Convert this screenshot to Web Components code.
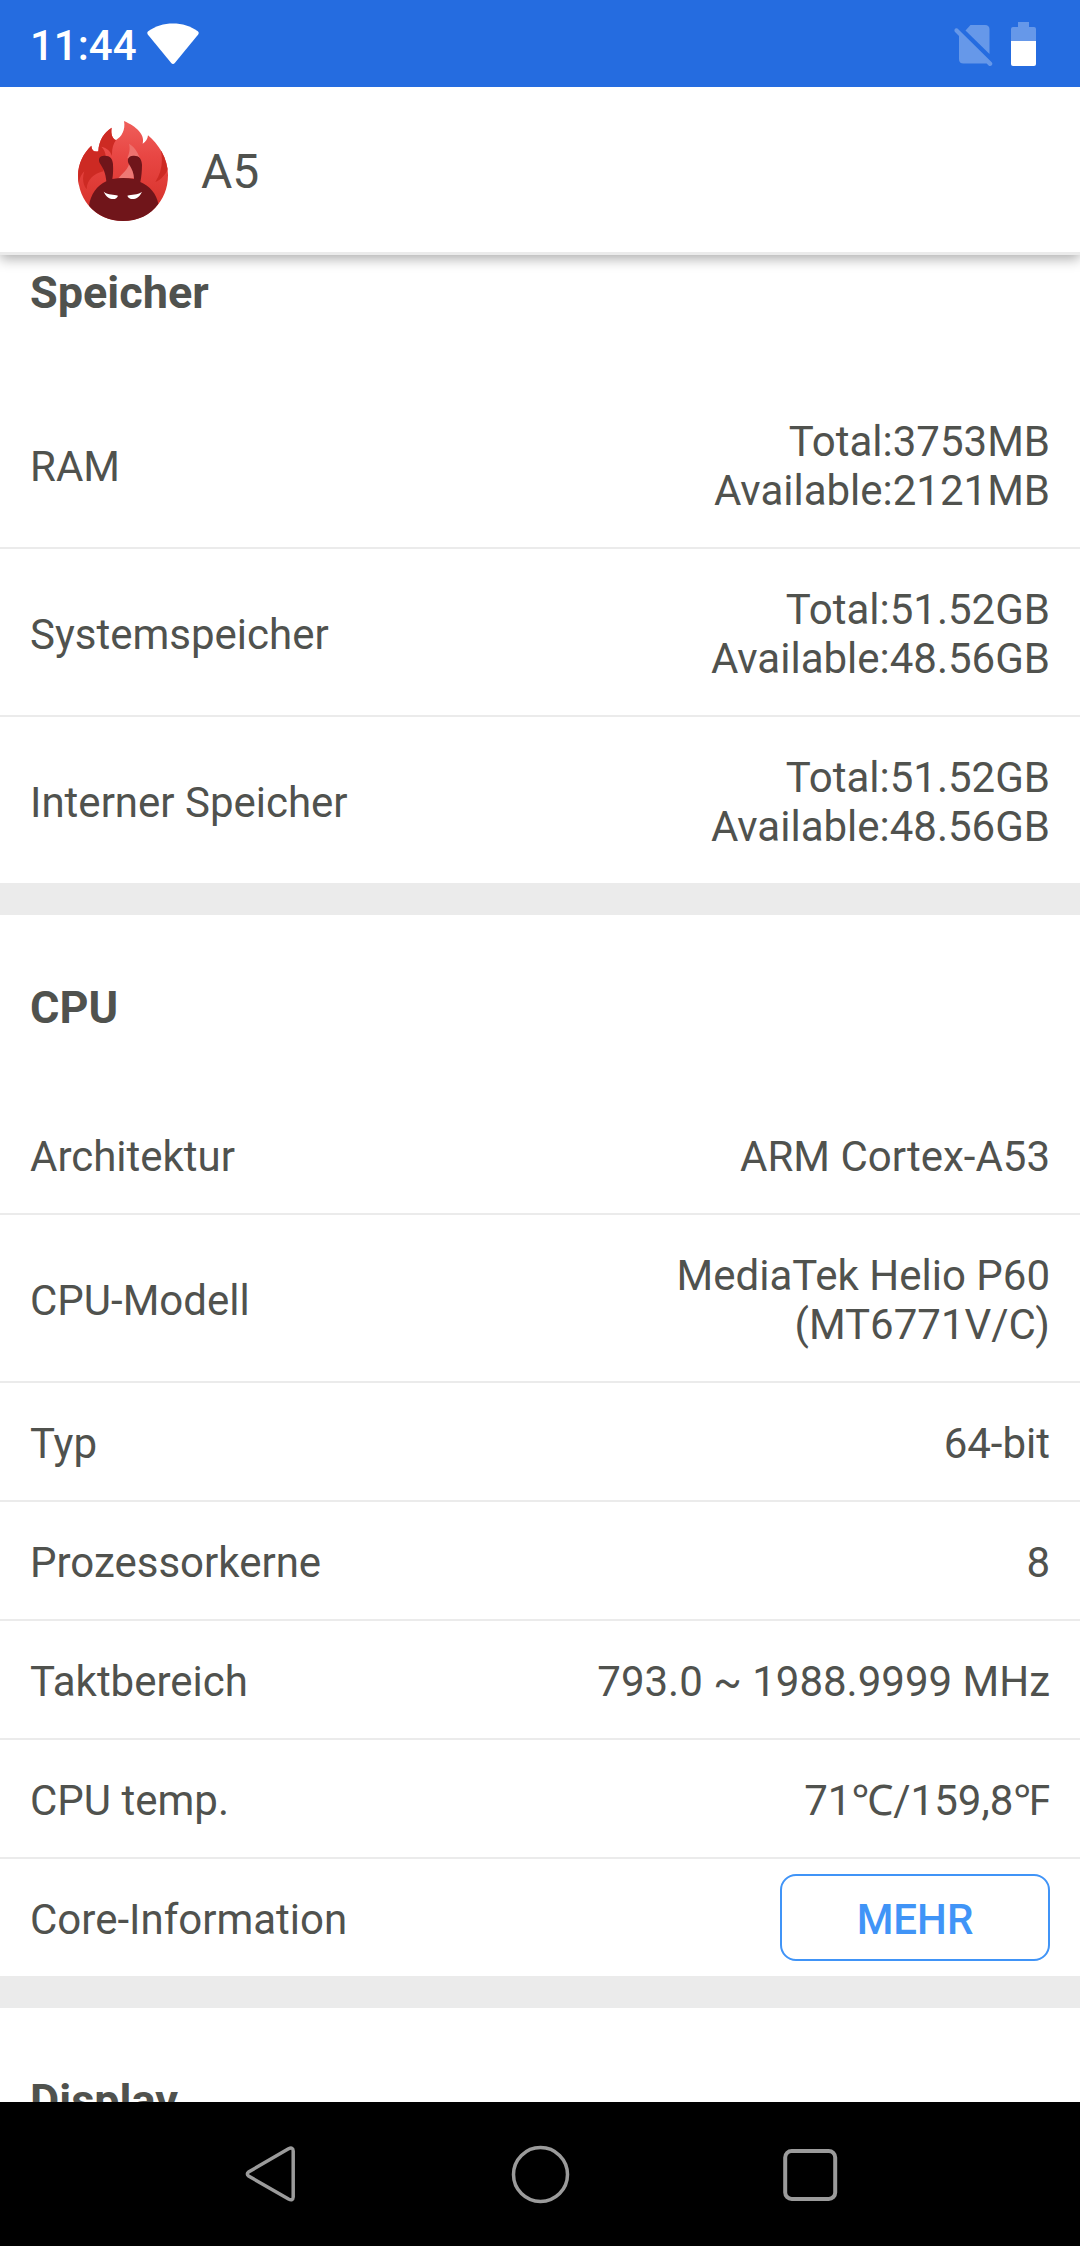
<!DOCTYPE html>
<html lang="de">
<head>
<meta charset="utf-8">
<meta name="viewport" content="width=device-width, initial-scale=1">
<title>A5</title>
<style>
  :root {
    --ink: #50524e;
    --rule: #ebebeb;
    --accent: #4094f7;
    --status: #256ce0;
  }
  body {
    margin: 0;
    background: #fff;
    color: var(--ink);
    font-family: Roboto, "Noto Sans", sans-serif;
    font-size: 42px;
    line-height: 49px;
  }
</style>
</head>
<body>
<device-screen>
  <status-bar slot="top" time="11:44"></status-bar>
  <app-bar slot="top">A5</app-bar>

  <info-section heading="Speicher" scrolled>
    <info-row label="RAM">Total:3753MB<br>Available:2121MB</info-row>
    <info-row label="Systemspeicher">Total:51.52GB<br>Available:48.56GB</info-row>
    <info-row label="Interner Speicher">Total:51.52GB<br>Available:48.56GB</info-row>
  </info-section>

  <info-section heading="CPU">
    <info-row label="Architektur">ARM Cortex-A53</info-row>
    <info-row label="CPU-Modell">MediaTek Helio P60<br>(MT6771V/C)</info-row>
    <info-row label="Typ">64-bit</info-row>
    <info-row label="Prozessorkerne">8</info-row>
    <info-row label="Taktbereich">793.0 ~ 1988.9999 MHz</info-row>
    <info-row label="CPU temp.">71℃/159,8℉</info-row>
    <info-row label="Core-Information"><more-button slot="action">MEHR</more-button></info-row>
  </info-section>

  <info-section heading="Display"></info-section>

  <nav-bar slot="bottom"></nav-bar>
</device-screen>

<script>
class ShadowElement extends HTMLElement {
  constructor() {
    super();
    this.attachShadow({ mode: "open" });
  }
  connectedCallback() {
    this.shadowRoot.innerHTML = this.render();
  }
}

customElements.define("device-screen", class extends ShadowElement {
  render() {
    return `
      <style>
        :host { display: flex; flex-direction: column; height: 100vh; }
        header { position: relative; z-index: 1; flex: none; }
        main { flex: 1; min-height: 0; overflow: hidden; }
        footer { flex: none; }
      </style>
      <header><slot name="top"></slot></header>
      <main><slot></slot></main>
      <footer><slot name="bottom"></slot></footer>`;
  }
});

customElements.define("status-bar", class extends ShadowElement {
  render() {
    return `
      <style>
        :host {
          display: flex; align-items: center; box-sizing: border-box;
          position: relative; z-index: 1;
          height: 87px; padding: 0 44px 0 30px;
          background: var(--status); color: #fff; font-weight: 500;
        }
        span { padding-top: 4px; }
        svg { display: block; fill: currentColor; }
        .wifi { margin-left: 10px; }
        .end { display: flex; align-items: center; gap: 17px; margin-left: auto; }
      </style>
      <span>${this.getAttribute("time")}</span>
      <svg class="wifi" width="52" height="42" viewBox="0 0 52 42" aria-hidden="true">
        <path d="M1.2 8.2 C8 3 17 .4 26 .4 S44 3 50.800 8.200 Q52.400 9.600 51.200 11.400 L28 39.800 Q26 42.200 24 39.800 L.8 11.400 Q-.4 9.600 1.200 8.200Z"/>
      </svg>
      <div class="end">
        <svg width="40" height="44" viewBox="0 0 40 44" fill-opacity=".3" aria-hidden="true">
          <path d="M16.500 3 H31 Q35.500 3 35.500 7.500 V32 L11.500 8.500Z"/>
          <path d="M3.500 6.500 Q1.500 5.600 .6 7.600 Q0 9 1.300 10.300 L5 14 V37 Q5 41.500 9.500 41.500 H32.700 L34.600 43.400 Q36.200 44.600 37.800 43.300 Q39 41.600 37.700 40.200Z"/>
        </svg>
        <svg width="25" height="44" viewBox="0 0 25 44" aria-hidden="true">
          <path fill-opacity=".3" d="M7 0 H18 V5 H23 Q25 5 25 7 V19 H0 V7 Q0 5 2 5 H7Z"/>
          <path d="M0 19 H25 V42 Q25 44 23 44 H2 Q0 44 0 42Z"/>
        </svg>
      </div>`;
  }
});

customElements.define("app-bar", class extends ShadowElement {
  render() {
    return `
      <style>
        :host {
          display: flex; align-items: center; gap: 33px; box-sizing: border-box;
          height: 168px; padding: 3px 78px 0;
          background: #fff; border-bottom: 3px solid var(--rule);
          box-shadow: 0 4px 12px rgba(0, 0, 0, .32);
        }
        svg { display: block; flex: none; }
        h1 { margin: 0; padding-top: 2px; font-size: 48px; line-height: 56px; font-weight: 400; }
      </style>
      <svg width="90" height="100" viewBox="54 33 270 300" role="img" aria-label="AnTuTu">
        <defs>
          <linearGradient id="flame" x1="0" y1="33" x2="0" y2="300" gradientUnits="userSpaceOnUse">
            <stop offset="0" stop-color="#ef5f5b"/>
            <stop offset=".4" stop-color="#e84643"/>
            <stop offset="1" stop-color="#d7322b"/>
          </linearGradient>
          <linearGradient id="glow" x1="0" y1="100" x2="0" y2="205" gradientUnits="userSpaceOnUse">
            <stop offset="0" stop-color="#ee6f6b"/>
            <stop offset="1" stop-color="#ee7a76"/>
          </linearGradient>
          <clipPath id="disc">
            <path d="M54 196 C55 160 70 130 94 107 C95 121 102 127 115 124 C116 92 132 67 155 53 C152 72 157 86 168 90 C185 80 197 60 192 33 C229 49 256 74 248 101 C258 95 263 86 264 76 C295 102 324 145 324 195 C324 275 265 333 189 333 C112 333 54 275 54 196Z"/>
          </clipPath>
        </defs>
        <g clip-path="url(#disc)">
          <path fill="url(#flame)" d="M50 30 H330 V335 H50Z"/>
          <path fill="#cd2a23" d="M50 30 H170 C172 50 158 80 168 90 C160 101 155 116 156 138 C152 124 140 113 124 110 C133 119 137 129 137 140 L130 184 C103 190 81 208 80 238 C69 225 66 205 73 184 C61 196 56 212 56 230 H50Z"/>
          <path fill="#cd2a23" d="M302 117 C310 155 305 187 286 216 C306 207 319 190 326 172 V117Z"/>
          <path fill="url(#glow)" d="M207 101 C212 119 206 132 202 145 L240 145 C232 124 222 110 207 101Z M208 158 C205 178 190 186 175 205 H230Z"/>
        </g>
        <path fill="#70151a" d="M87 287 C92 254 111 226 139 214 C137 190 130 175 121 162 C113 149 117 137 132 137 C150 136 158 145 159 163 C160 182 159 196 157 207 C178 203 202 203 222 207 C222 190 216 177 207 163 C200 149 204 138 220 137 C237 136 245 146 246 164 C246 184 244 201 241 216 C270 228 289 252 295 281 C272 315 233 333 189 333 C148 333 111 316 87 287Z"/>
        <path fill="#fff" d="M131 245 C146 256 161 252 174 257 C171 270 145 275 131 245Z M246 245 C231 256 216 252 202 257 C207 271 233 274 246 245Z"/>
      </svg>
      <h1><slot></slot></h1>`;
  }
});

customElements.define("info-section", class extends ShadowElement {
  render() {
    return `
      <style>
        :host { display: block; }
        :host(:not([scrolled])) { border-top: 32px solid var(--rule); }
        h2 {
          margin: 0; padding: 66px 30px 62px;
          font-size: 45px; line-height: 53px; font-weight: 700;
        }
        :host([scrolled]) h2 { padding-top: 11px; }
      </style>
      <section>
        <h2>${this.getAttribute("heading")}</h2>
        <slot></slot>
      </section>`;
  }
});

customElements.define("info-row", class extends ShadowElement {
  render() {
    return `
      <style>
        :host {
          display: flex; align-items: center; justify-content: space-between; gap: 30px;
          padding: 0 30px; border-bottom: 2px solid var(--rule);
        }
        :host(:last-child) { border-bottom: 0; }
        .label, .value { padding: 36px 0 32px; }
        .value { margin-left: auto; text-align: right; }
      </style>
      <span class="label">${this.getAttribute("label")}</span>
      ${this.querySelector("[slot=action]")
        ? `<slot name="action"></slot>`
        : `<span class="value"><slot></slot></span>`}`;
  }
});

customElements.define("more-button", class extends ShadowElement {
  render() {
    return `
      <style>
        :host { display: block; }
        button {
          display: block; box-sizing: border-box; margin: 0;
          min-width: 270px; height: 87px; padding: 4px 30px 0;
          border: 2px solid var(--accent); border-radius: 16px;
          background: #fff; color: var(--accent);
          font: inherit; font-weight: 500; cursor: pointer;
        }
      </style>
      <button type="button"><slot></slot></button>`;
  }
});

customElements.define("nav-bar", class extends ShadowElement {
  render() {
    return `
      <style>
        :host { display: flex; justify-content: center; height: 144px; background: #000; }
        button {
          flex: 0 1 25%; display: flex; align-items: center; justify-content: center;
          margin: 0; padding: 0; border: 0; background: none; cursor: pointer;
        }
        svg { display: block; fill: none; stroke: #9b9b9b; stroke-width: 3.5; stroke-linejoin: round; }
      </style>
      <button type="button" aria-label="Zurück">
        <svg width="60" height="60" viewBox="0 0 60 60"><path d="M8.500 28 L48.500 4.800 Q53 2.600 53.200 7 V53 Q53 57.200 48.500 55 L8.500 32 Q6.200 30 8.500 28Z"/></svg>
      </button>
      <button type="button" aria-label="Startseite">
        <svg width="60" height="60" viewBox="0 0 60 60"><circle cx="30.500" cy="30.500" r="27"/></svg>
      </button>
      <button type="button" aria-label="Letzte Apps">
        <svg width="60" height="60" viewBox="0 0 60 60"><rect x="5.200" y="6.900" width="50" height="48" rx="6.500" stroke-width="4"/></svg>
      </button>`;
  }
});
</script>
</body>
</html>
